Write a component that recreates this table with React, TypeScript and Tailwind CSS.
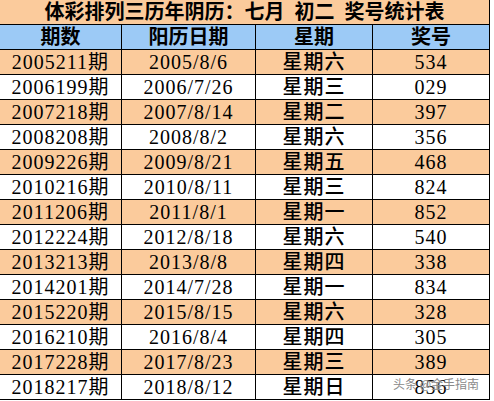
const rows = [
  ['2005211期', '2005/8/6', '星期六', '534'],
  ['2006199期', '2006/7/26', '星期三', '029'],
  ['2007218期', '2007/8/14', '星期二', '397'],
  ['2008208期', '2008/8/2', '星期六', '356'],
  ['2009226期', '2009/8/21', '星期五', '468'],
  ['2010216期', '2010/8/11', '星期三', '824'],
  ['2011206期', '2011/8/1', '星期一', '852'],
  ['2012224期', '2012/8/18', '星期六', '540'],
  ['2013213期', '2013/8/8', '星期四', '338'],
  ['2014201期', '2014/7/28', '星期一', '834'],
  ['2015220期', '2015/8/15', '星期六', '328'],
  ['2016210期', '2016/8/4', '星期四', '305'],
  ['2017228期', '2017/8/23', '星期三', '389'],
  ['2018217期', '2018/8/12', '星期日', '856'],
];

const headers = ['期数', '阳历日期', '星期', '奖号'];

export default function App() {
  return (
    <div
      className="relative w-[494px] h-[401px] bg-white text-black overflow-hidden"
      style={{ fontFamily: '"Liberation Serif", "Noto Sans CJK SC", serif' }}
    >
      <div className="w-[490px]">
        <div className="h-[25px] bg-[#fbcb9c] border-b border-r border-black flex items-center justify-center text-[20px] font-bold leading-none whitespace-pre">
          体彩排列三历年阴历：七月  初二  奖号统计表
        </div>
        <div className="grid grid-cols-[122px_134px_117px_117px] bg-[#9ccaf6]">
          {headers.map((h) => (
            <div
              key={h}
              className="h-[25px] border-b border-r border-black flex items-center justify-center text-[20px] font-semibold leading-none"
            >
              {h}
            </div>
          ))}
        </div>
        {rows.map((r, i) => (
          <div
            key={r[0]}
            className={`grid grid-cols-[122px_134px_117px_117px] ${i % 2 === 0 ? 'bg-[#fbcb9c]' : 'bg-white'}`}
          >
            {r.map((c, j) => (
              <div
                key={j}
                className={`h-[25px] border-b border-r border-black flex items-center justify-center text-[20px] leading-none tracking-[1px] ${j === 2 ? 'font-medium' : ''}`}
              >
                {c}
              </div>
            ))}
          </div>
        ))}
      </div>
      <div
        className="absolute left-[393px] top-[378px] text-[12px] text-[#8a8a8a] leading-none whitespace-nowrap"
        style={{ fontFamily: '"Noto Sans CJK SC", sans-serif', textShadow: '0 0 2px #fff' }}
      >
        头条 @金手指南
      </div>
    </div>
  );
}
